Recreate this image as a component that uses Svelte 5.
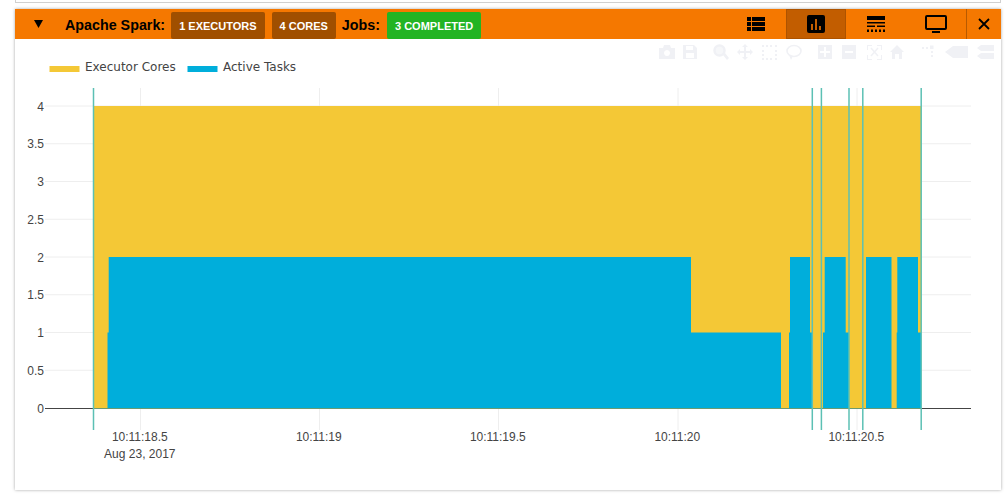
<script>
  const gridY = [4, 3.5, 3, 2.5, 2, 1.5, 1, 0.5, 0].map((v) => ({ v, y: 408 - v * 75.5 }));
  const ticks = [
    { x: 140.5, t: '10:11:18.5' },
    { x: 319.5, t: '10:11:19' },
    { x: 498.5, t: '10:11:19.5' },
    { x: 678, t: '10:11:20' },
    { x: 857, t: '10:11:20.5' }
  ];
  const markers = [93.5, 812.3, 821.4, 849, 862.8, 921.2];
  const L1 = 332.5, L2 = 257, B = 408;
  const blue = [
    [107.5,B],[107.5,L1],[108.7,L1],[108.7,L2],[691,L2],[691,L1],[781,L1],[781,B],
    [789,B],[789,L1],[790,L1],[790,L2],[810,L2],[810,L1],[812,L1],[812,B],
    [823,B],[823,L1],[824.7,L1],[824.7,L2],[845.7,L2],[845.7,L1],[849,L1],[849,B],
    [866,B],[866,L2],[891.5,L2],[891.5,B],
    [896.7,B],[896.7,L1],[897.3,L1],[897.3,L2],[918,L2],[918,L1],[921,L1],[921,B]
  ].map((p) => p.join(',')).join(' ');
</script>

<div class="sliver"></div>
<section class="card">
  <header class="bar">
    <svg class="caret" width="9" height="8" viewBox="0 0 9 8"><path d="M0 0H9L4.5 8Z" /></svg>
    <strong class="title">Apache Spark:</strong>
    <span class="badge brown">1 EXECUTORS</span>
    <span class="badge brown">4 CORES</span>
    <strong class="jobs">Jobs:</strong>
    <span class="badge green">3 COMPLETED</span>
    <div class="tabs">
      <div class="tab">
        <svg width="18" height="16" viewBox="0 0 18 16"><path d="M0 1H4V5H0ZM5 1H18V5H5ZM0 6H4V10H0ZM5 6H18V10H5ZM0 11H4V15H0ZM5 11H18V15H5Z" /></svg>
      </div>
      <div class="tab active">
        <svg width="18" height="18" viewBox="0 0 18 18"><path fill-rule="evenodd" d="M2 0H16A2 2 0 0 1 18 2V16A2 2 0 0 1 16 18H2A2 2 0 0 1 0 16V2A2 2 0 0 1 2 0ZM4 9V15H6V9ZM8 4V15H10V4ZM12 11V15H14V11Z" /></svg>
      </div>
      <div class="tab">
        <svg width="18" height="16" viewBox="0 0 18 16"><path d="M0 0H18V4H0ZM0 6H18V7.5H0ZM0 9.5H8V11H0ZM10 9.5H18V11H10ZM0 13.5H2V16H0ZM4 13.5H6V16H4ZM8 13.5H10V16H8ZM12 13.5H14V16H12ZM16 13.5H18V16H16Z" /></svg>
      </div>
      <div class="tab">
        <svg width="22" height="18" viewBox="0 0 22 18"><path fill-rule="evenodd" d="M2 0H20A2 2 0 0 1 22 2V13A2 2 0 0 1 20 15H2A2 2 0 0 1 0 13V2A2 2 0 0 1 2 0ZM2 2V13H20V2ZM7 16H15V18H7Z" /></svg>
      </div>
      <div class="close">
        <svg width="12" height="12" viewBox="0 0 12 12"><path d="M1 1L11 11M11 1L1 11" /></svg>
      </div>
    </div>
  </header>

  <div class="plot">
    <svg class="chart" width="986" height="451" viewBox="15 39 986 451">
      {#each gridY as g}
        {#if g.v !== 0}<line class="grid" x1="45" x2="971" y1={g.y} y2={g.y} />{/if}
        <text class="tick" x="44" y={g.y + 4.5} text-anchor="end">{g.v}</text>
      {/each}
      {#each ticks as t}
        <line class="grid" x1={t.x} x2={t.x} y1="88" y2="430" />
        <text class="tick" x={t.x - 0.7} y="441" text-anchor="middle">{t.t}</text>
      {/each}
      <text class="tick" x="139.8" y="458" text-anchor="middle">Aug 23, 2017</text>

      <rect x="94" y="106" width="827" height="302" fill="#f4c836" />
      <polygon points={blue} fill="#00aedb" />
      <line class="zero" x1="45" x2="971" y1="408.5" y2="408.5" />
      <line x1="94" x2="921" y1="408.5" y2="408.5" stroke="#6b9a72" />
      {#each markers as x}
        <line class="marker" x1={x} x2={x} y1="88" y2="430" />
      {/each}

      <rect x="49.5" y="66" width="30" height="6" fill="#f4c836" />
      <text class="legend" x="85" y="71">Executor Cores</text>
      <rect x="187.5" y="66" width="30" height="6" fill="#00aedb" />
      <text class="legend" x="223" y="71">Active Tasks</text>

      <g class="mode">
        <path fill-rule="evenodd" d="M659 48H663L664 45H670L671 48H675V59H659ZM667 50A3 3 0 1 0 667.01 50Z" />
        <path fill-rule="evenodd" d="M683 45H694L697 48V59H683ZM686 46V50H693V46ZM686 53V58H694V53Z" />
        <circle cx="719.5" cy="50.5" r="5" fill="#f6f7f9" stroke="#f0f1f5" stroke-width="2.5" />
        <path d="M723 55L725 53L729 58L727 60Z" />
        <path d="M745 44L748 47H746V51H750V49L753 52L750 55V53H746V57H748L745 60L742 57H744V53H740V55L737 52L740 49V51H744V47H742Z" />
        <path d="M762 45h2v2h-2zM766 45h2v2h-2zM770 45h2v2h-2zM775 45h2v2h-2zM762 50h2v2h-2zM775 50h2v2h-2zM762 54h2v2h-2zM775 54h2v2h-2zM762 58h2v2h-2zM766 58h2v2h-2zM770 58h2v2h-2zM775 58h2v2h-2z" />
        <ellipse cx="794" cy="51" rx="7" ry="5.5" fill="none" stroke="#f0f1f5" stroke-width="1.6" />
        <path d="M789 55L791 60L793 56Z" />
        <path fill-rule="evenodd" d="M818 45H832V59H818ZM824 47V51H820V53H824V57H826V53H830V51H826V47Z" />
        <path fill-rule="evenodd" d="M842 45H856V59H842ZM845 51V53H853V51Z" />
        <path d="M867 45h5v1h-4v4h-1zM877 45h5v5h-1v-4h-4zM867 55h1v4h4v1h-5zM881 55h1v5h-5v-1h4z" />
        <path class="cross" d="M871 48L878 56M878 48L871 56" />
        <path d="M897 45L904 52H902V59H899V54H895V59H892V52H890Z" />
        <path d="M922 47h2v2h-2zM926 47h2v2h-2zM930 45.5h3.5v3.5h-3.5zM931 51h2v2h-2zM931 55h2v2h-2z" />
        <path d="M945 52L953 46H968V58H953Z" />
        <path d="M981 45H994V51H981L977 48ZM981 53H994V59H981L977 56Z" />
      </g>
    </svg>
  </div>
</section>

<style>
  :global(body) { background: #fff; min-height: 496px; }
  .sliver {
    height: 3px;
    margin: 0 5px 0 15px;
    border: 1px solid #d0d0d0;
    border-top: 0;
    box-sizing: border-box;
  }
  .card {
    box-sizing: border-box;
    width: 986px;
    height: 481px;
    margin: 6px 0 0 15px;
    background: #fff;
    box-shadow: 0 0 3px rgba(0, 0, 0, 0.35);
    font-family: "Liberation Sans", sans-serif;
  }
  .bar {
    display: flex;
    align-items: flex-end;
    height: 30px;
    padding-left: 19px;
    background: #f57800;
    color: #000;
    font-size: 14.3px;
  }
  .caret { align-self: center; fill: #000; margin-right: 22px; }
  .title { align-self: center; margin: 2px 6px 0 0; line-height: 16px; }
  .jobs { align-self: center; margin: 2px 7px 0 -1px; line-height: 16px; }
  .badge {
    display: flex;
    align-items: center;
    height: 27px;
    padding: 0 8px;
    border-radius: 2px;
    color: #fff;
    font-size: 11px;
    font-weight: 700;
  }
  .brown { background: #a04f00; margin-right: 7px; }
  .green { background: #22b423; }
  .tabs { display: flex; align-self: stretch; margin-left: auto; }
  .tab {
    display: flex;
    align-items: center;
    justify-content: center;
    box-sizing: border-box;
    width: 60px;
    fill: #000;
  }
  .tab.active { background: #c25d00; border: 1px solid #ad5300; }
  .close {
    display: flex;
    align-items: center;
    justify-content: center;
    box-sizing: border-box;
    width: 35px;
    border-left: 1px solid #b85a00;
  }
  .close path { stroke: #000; stroke-width: 1.8; fill: none; }
  .plot { height: 451px; }
  .chart { display: block; }
  .grid { stroke: #eee; stroke-width: 1; }
  .zero { stroke: #444; stroke-width: 1; }
  .marker { stroke: #5cc0b4; stroke-width: 1.5; }
  .tick { font-family: "Liberation Sans", sans-serif; font-size: 12px; fill: #444; }
  .legend { font-family: "DejaVu Sans", sans-serif; font-size: 12px; fill: #444; }
  .mode path { fill: #f0f1f5; }
  .mode path.cross { fill: none; stroke: #f0f1f5; stroke-width: 1.5; }
</style>
